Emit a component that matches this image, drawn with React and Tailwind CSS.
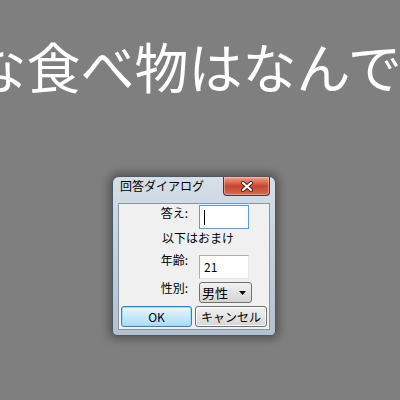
import React from 'react';

const CloseButton = () => (
  <div className="flex h-[19px] w-[47px] items-center justify-center rounded-b-[4px] border border-t-0 border-[#6b2a1f] bg-linear-to-b from-[#e8a493] via-[#c8452d] to-[#d26a52] shadow-[inset_0_0_0_1px_rgba(255,220,210,0.45)]">
    <svg width="14" height="11" viewBox="0 0 14 11">
      <path d="M3 2 L11 9 M11 2 L3 9" stroke="#4a1e18" strokeWidth="4" strokeLinecap="round" />
      <path d="M3 2 L11 9 M11 2 L3 9" stroke="#ffffff" strokeWidth="2.2" strokeLinecap="round" />
    </svg>
  </div>
);

const Field = ({ value, focused }) => (
  <div
    className={`flex h-[24px] w-[50px] items-center bg-white pl-[4px] text-[12px] text-black ${
      focused ? 'border border-[#569de5]' : 'border border-[#abadb3] border-b-[#e3e9ef] border-r-[#e3e9ef]'
    }`}
  >
    {focused ? <span className="h-[15px] w-px bg-black" /> : value}
  </div>
);

export default function App() {
  return (
    <div className="h-[400px] w-[400px] overflow-hidden bg-[#7f7f7f] font-['Noto_Sans_CJK_JP',sans-serif]">
      {/* Question heading (overflows both sides) */}
      <div className="flex justify-center pt-[39px]">
        <h1 className="whitespace-nowrap text-[54px] leading-[54px] font-normal text-white">
          好きな食べ物はなんですか?
        </h1>
      </div>

      {/* Dialog window */}
      <div className="ml-[112px] mt-[83px] flex h-[160px] w-[164px] flex-col rounded-t-[7px] rounded-b-[5px] border border-[#4d5866] bg-linear-to-b from-[#d6dfe8] to-[#b3c0ce] shadow-[0_0_10px_3px_rgba(0,0,0,0.35)]">
        <div className="flex h-[26px] items-start justify-between pl-[7px] pr-[5px]">
          <span className="pt-[1px] text-[12px] leading-[16px] text-black">回答ダイアログ</span>
          <CloseButton />
        </div>

        <div className="mx-[5px] h-[127px] border border-[#8796a6] bg-[#f0f0f0] text-[12px] leading-[16px] text-black">
          <div className="mt-px flex items-start">
            <span className="w-[69px] text-right">答え:</span>
            <div className="ml-[11px]">
              <Field focused />
            </div>
          </div>

          <div className="mt-px pl-[43px]">以下はおまけ</div>

          <div className="mt-[9px] flex items-start">
            <span className="-mt-[3px] w-[69px] text-right">年齢:</span>
            <div className="ml-[11px]">
              <Field value="21" />
            </div>
          </div>

          <div className="mt-[3px] flex items-start">
            <span className="-mt-[2px] w-[69px] text-right">性別:</span>
            <div className="ml-[11px] flex h-[21px] w-[53px] items-center justify-between rounded-[3px] border border-[#707070] bg-linear-to-b from-[#f2f2f2] to-[#d4d4d4] pl-[2px] pr-[5px]">
              <span className="text-[13px]">男性</span>
              <svg width="7" height="4" viewBox="0 0 7 4">
                <path d="M0 0 H7 L3.5 4 Z" fill="#000" />
              </svg>
            </div>
          </div>

          <div className="mt-[3px] flex gap-[3px] pl-[2px]">
            <button className="h-[21px] w-[71px] rounded-[3px] border border-[#3c7fb1] bg-linear-to-b from-[#eaf6fd] to-[#a9dbf6] text-[12px] leading-[16px] text-black shadow-[inset_0_0_0_1px_#9fdcfb]">
              OK
            </button>
            <button className="h-[21px] w-[72px] rounded-[3px] border border-[#707070] bg-linear-to-b from-[#f2f2f2] to-[#d6d6d6] text-[12px] leading-[16px] text-black shadow-[inset_0_0_0_1px_#fcfcfc]">
              キャンセル
            </button>
          </div>
        </div>
      </div>
    </div>
  );
}
